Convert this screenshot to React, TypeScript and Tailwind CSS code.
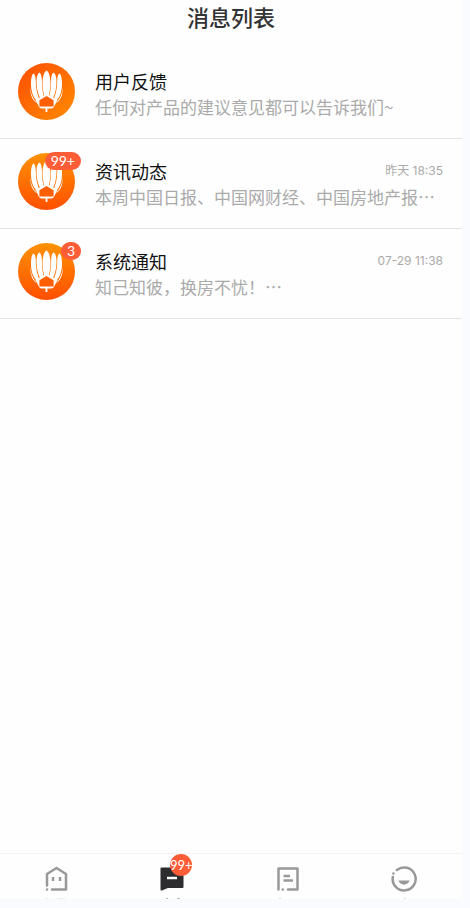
import { ReactNode } from 'react';

type Message = {
  title: string;
  text: string;
  time?: string;
  badge?: string;
  diagonal?: boolean;
};

const messages: Message[] = [
  { title: '用户反馈', text: '任何对产品的建议意见都可以告诉我们~', diagonal: true },
  { title: '资讯动态', text: '本周中国日报、中国网财经、中国房地产报⋯', time: '昨天 18:35', badge: '99+' },
  { title: '系统通知', text: '知己知彼，换房不忧！⋯', time: '07-29 11:38', badge: '3' },
];

function LotusLogo({ id, diagonal }: { id: string; diagonal?: boolean }) {
  return (
    <svg viewBox="0 0 57 57" className="block size-full" aria-hidden="true">
      <defs>
        <linearGradient id={id} x1="0" y1="0" x2={diagonal ? '1' : '0'} y2="1">
          <stop offset="0" stopColor={diagonal ? '#ff4d00' : '#ff9200'} />
          <stop offset="1" stopColor={diagonal ? '#ff8c00' : '#ff4f00'} />
        </linearGradient>
      </defs>
      <circle cx="28.5" cy="28.5" r="28.5" fill={`url(#${id})`} />
      <g fill="#fff">
        <path d="M28.5 7.5C31.2 8.8 32.5 15 32.5 20.5C32.5 26 31.4 30 30.4 34H26.6C25.6 30 24.5 26 24.5 20.5C24.5 15 25.8 8.8 28.5 7.5Z" />
        <path d="M21.4 9.4C23.2 10.4 23.9 14 23.9 18C23.9 24 24.6 29 26 34.5L22.4 36C19.4 30 18.4 24 18.5 18C18.6 13.5 19.6 10.4 21.4 9.4Z" />
        <path d="M35.6 9.4C33.8 10.4 33.1 14 33.1 18C33.1 24 32.4 29 31 34.5L34.6 36C37.6 30 38.6 24 38.5 18C38.4 13.5 37.4 10.4 35.6 9.4Z" />
        <path d="M15.4 10.4C17.3 11.2 17.8 15 17.8 19C17.9 25.5 19 31 21.8 37.5L21.5 40C16.2 37 13.2 30 13 22C12.9 17 13.5 11.6 15.4 10.4Z" />
        <path d="M41.6 10.4C39.7 11.2 39.2 15 39.2 19C39.1 25.5 38 31 35.2 37.5L35.5 40C40.8 37 43.8 30 44 22C44.1 17 43.5 11.6 41.6 10.4Z" />
        <path d="M12.3 24C12.8 31 15 36 19.5 40.5C15.2 38.5 12 33 12.3 24Z" />
        <path d="M44.7 24C44.2 31 42 36 37.5 40.5C41.8 38.5 45 33 44.7 24Z" />
        <path d="M17.5 37L28.5 31L39.5 37L35.8 44.2L33.8 45.4H29.4V49H27.6V45.4H23.2L21.2 44.2Z" />
      </g>
      <path d="M28.5 33L35.6 37.2V43.6H21.4V37.2Z" fill="#ff5f00" />
    </svg>
  );
}

function MessageRow({ message, index }: { message: Message; index: number }) {
  return (
    <li className="border-b border-[#e3e3e3]">
      <button type="button" className="flex h-[89px] w-full items-start pt-3.5 pr-[19px] pl-[18px] text-left">
        <span className="relative block size-[57px] shrink-0">
          <LotusLogo id={`lotus-${index}`} diagonal={message.diagonal} />
          {message.badge && (
            <span className="absolute -top-px -right-[6px] flex h-[18px] min-w-[20px] items-center justify-center rounded-full bg-[#ff5c38] px-[6px] font-[Lato,sans-serif] text-[14px] leading-[18px] text-white">
              {message.badge}
            </span>
          )}
        </span>
        <span className="ml-5 block min-w-0 flex-1 pt-[5px]">
          <span className="flex items-start justify-between">
            <span className="text-[18px] leading-[26px] text-[#111]">{message.title}</span>
            <span className="font-[Inter,'Noto_Sans_CJK_SC',sans-serif] text-[12px] leading-[26px] text-[#aaa]">{message.time}</span>
          </span>
          <span className="block truncate text-[17px] leading-[26px] text-[#aaa]">{message.text}</span>
        </span>
      </button>
    </li>
  );
}

function Tab({ label, badge, current, children }: { label: string; badge?: string; current?: boolean; children: ReactNode }) {
  return (
    <button
      type="button"
      aria-label={label}
      aria-current={current ? 'page' : undefined}
      className="flex flex-1 justify-center pt-3"
    >
      <span className="relative block h-[33px] w-7">
        <svg viewBox="0 0 28 33" className="block h-[33px] w-7" fill="none" stroke="#999" strokeWidth="2.5" strokeLinecap="round" strokeLinejoin="round" aria-hidden="true">
          {children}
        </svg>
        {badge && (
          <span className="absolute -top-3 left-[11px] flex size-[22px] items-center justify-center rounded-full bg-[#ff5c38] font-[Lato,sans-serif] text-[13px] leading-none text-white">
            {badge}
          </span>
        )}
      </span>
    </button>
  );
}

export default function App() {
  return (
    <div className="min-h-screen bg-[#fafbff] pr-2 pb-[9px] font-['Noto_Sans_CJK_SC',sans-serif]">
      <div className="flex min-h-[calc(100vh-9px)] flex-col bg-[#fefefe]">
        <header className="flex h-[49px] items-start justify-center">
          <h1 className="text-[22px] leading-8 font-medium text-[#333]">消息列表</h1>
        </header>
        <main className="flex-1">
          <ul>
            {messages.map((message, index) => (
              <MessageRow key={message.title} message={message} index={index} />
            ))}
          </ul>
        </main>
        <nav className="flex h-[46px] border-t border-[#f3f3f3]">
          <Tab label="首页">
            <path d="M3 19.5V8L12.5 2L22 8V23.5H8" />
            <path d="M3 23.5V23.6" />
            <path d="M9 11V15M16 11V15" strokeLinecap="butt" />
            <path d="M1 32.5H4M13 32.5H21" stroke="#ececec" strokeWidth="1" strokeLinecap="butt" />
          </Tab>
          <Tab label="消息" badge="99+" current>
            <path d="M2.5 2.5H23.5V21H8.5L2.5 23.5Z" fill="#2d2d2f" stroke="#2d2d2f" strokeWidth="2" />
            <path d="M8 12H18" stroke="#fff" strokeLinecap="butt" />
            <path d="M7 32.5H9M18 32.5H21" stroke="#bbb" strokeWidth="1" strokeLinecap="butt" />
          </Tab>
          <Tab label="报告">
            <path d="M3.5 23.5V2.5H22.5V23.5H13" />
            <path d="M7.8 23.5V23.6" />
            <path d="M8.5 10H15M8.5 14.5H18" strokeLinecap="butt" />
            <path d="M4 32.5H6" stroke="#ddd" strokeWidth="1" strokeLinecap="butt" />
          </Tab>
          <Tab label="我的">
            <path d="M6.9 4A11.5 11.5 0 1 1 2.8 11" />
            <path d="M3.4 7.5V7.6" />
            <path d="M8.5 14.5H19.5C18.5 20 9.5 20 8.5 14.5Z" fill="#999" stroke="none" />
            <path d="M14 32.5H16" stroke="#ddd" strokeWidth="1" strokeLinecap="butt" />
          </Tab>
        </nav>
      </div>
    </div>
  );
}
